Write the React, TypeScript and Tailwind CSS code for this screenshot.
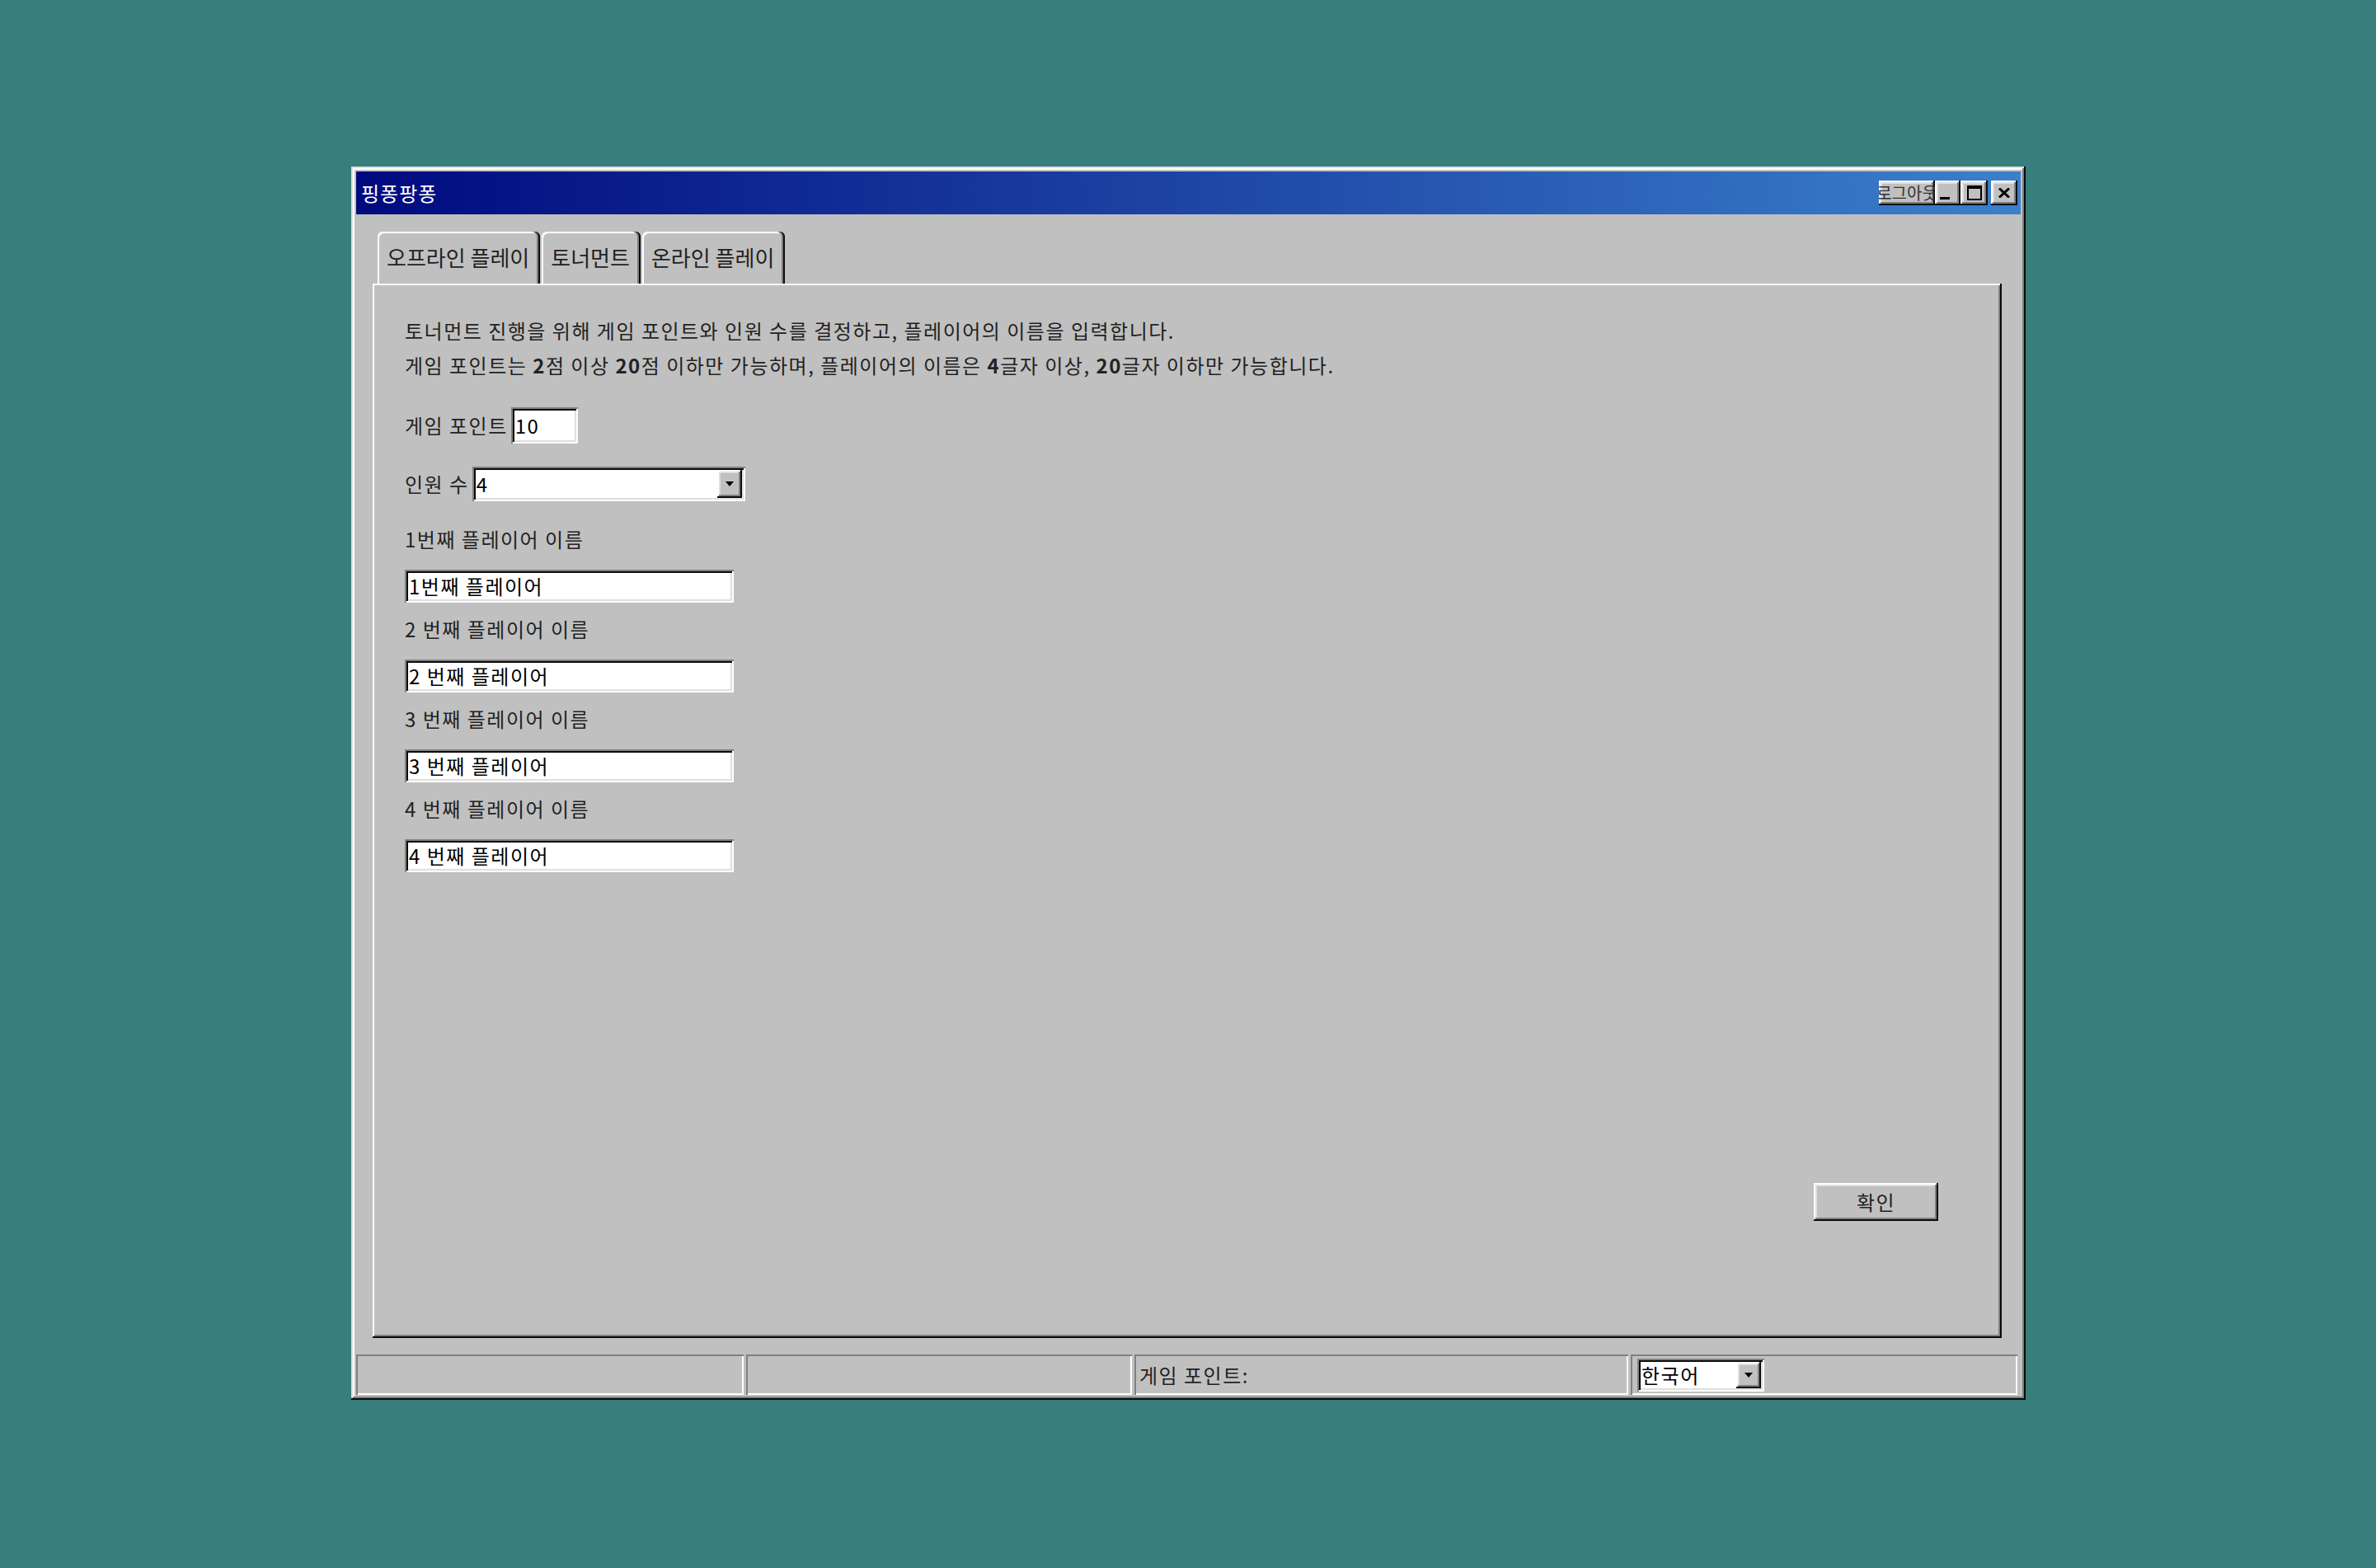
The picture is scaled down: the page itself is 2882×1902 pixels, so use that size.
import React from 'react';

// classic 3d borders, drawn with inset shadows
const raised =
  'shadow-[inset_-2px_-2px_0_#0a0a0a,inset_2px_2px_0_#ffffff,inset_-4px_-4px_0_#808080,inset_4px_4px_0_#dfdfdf]';
const sunken =
  'shadow-[inset_2px_2px_0_#808080,inset_-2px_-2px_0_#ffffff,inset_4px_4px_0_#0a0a0a,inset_-4px_-4px_0_#dfdfdf]';
const thinSunken = 'shadow-[inset_2px_2px_0_#808080,inset_-2px_-2px_0_#ffffff]';

const players = ['1번째', '2 번째', '3 번째', '4 번째'];

const Arrow = () => (
  <svg width="10" height="6" viewBox="0 0 10 6">
    <path d="M0 0h10L5 6z" fill="#000" />
  </svg>
);

const Select: React.FC<{ value: string; className: string }> = ({ value, className }) => (
  <div className={`flex bg-white p-[4px] ${sunken} ${className}`}>
    <span className="flex-1 self-center pl-[1px] text-[24px] leading-none tracking-[1.5px] text-black">{value}</span>
    <div className={`flex w-[30px] items-center justify-center bg-[#c0c0c0] ${raised}`}>
      <Arrow />
    </div>
  </div>
);

const TitleButton: React.FC<{ children: React.ReactNode; className?: string }> = ({ children, className = '' }) => (
  <div className={`flex h-[30px] items-center justify-center overflow-hidden bg-[#c0c0c0] ${raised} ${className}`}>
    {children}
  </div>
);

export default function App() {
  return (
    <div className="min-h-screen w-full bg-[#377e7c] pl-[426px] pt-[202px] font-['Noto_Sans_CJK_KR',sans-serif] text-[#222]">
      <div className="flex h-[1496px] w-[2031px] flex-col bg-[#c0c0c0] p-[6px] shadow-[inset_-2px_-2px_0_#0a0a0a,inset_2px_2px_0_#dfdfdf,inset_-4px_-4px_0_#808080,inset_4px_4px_0_#ffffff]">
        {/* title bar */}
        <div className="flex h-[52px] items-center justify-between bg-linear-to-r/srgb from-[#000a7e] to-[#3b80cc] pl-[6px] pr-[4px]">
          <span className="text-[24px] leading-none tracking-[1px] text-white">핑퐁팡퐁</span>
          <div className="flex items-center">
            <TitleButton className="w-[68px]">
              <span className="shrink-0 whitespace-nowrap text-[20px] leading-none text-[#333]">로그아웃</span>
            </TitleButton>
            <TitleButton className="w-[31px] items-end pb-[7px] pr-[8px]">
              <div className="h-[3px] w-[12px] bg-black" />
            </TitleButton>
            <TitleButton className="w-[33px]">
              <div className="h-[18px] w-[18px] border-2 border-t-[4px] border-black" />
            </TitleButton>
            <TitleButton className="ml-[4px] w-[32px]">
              <svg width="14" height="12" viewBox="0 0 14 12">
                <path d="M1 0.5 L13 11.5 M13 0.5 L1 11.5" stroke="#000" strokeWidth="3" />
              </svg>
            </TitleButton>
          </div>
        </div>

        {/* tabs */}
        <div className="mt-[21px] flex h-[63px] gap-[2px] pl-[26px]">
          {['오프라인 플레이', '토너먼트', '온라인 플레이'].map((t) => (
            <div
              key={t}
              className="flex items-center rounded-t-[6px] bg-[#c0c0c0] pl-[11px] pr-[13px] pb-[2px] text-[26px] leading-none shadow-[inset_-2px_0_0_#0a0a0a,inset_-4px_0_0_#808080,inset_2px_2px_0_#ffffff]"
            >
              {t}
            </div>
          ))}
        </div>

        {/* tab body */}
        <div className="ml-[20px] mr-[23px] flex flex-1 flex-col pl-[39px] pt-[36px] text-[24px] tracking-[1.5px] shadow-[inset_-2px_-2px_0_#0a0a0a,inset_2px_2px_0_#ffffff,inset_-4px_-4px_0_#808080]">
          <p className="leading-[42px]">
            토너먼트 진행을 위해 게임 포인트와 인원 수를 결정하고, 플레이어의 이름을 입력합니다.
          </p>
          <p className="leading-[42px]">
            게임 포인트는 <b>2</b>점 이상 <b>20</b>점 이하만 가능하며, 플레이어의 이름은 <b>4</b>글자 이상, <b>20</b>글자 이하만
            가능합니다.
          </p>

          <div className="mt-[30px] flex h-[44px] items-center gap-[4px]">
            <span className="leading-none">게임 포인트</span>
            <div className={`flex h-[44px] w-[81px] items-center bg-white pl-[5px] leading-none text-black ${sunken}`}>
              10
            </div>
          </div>

          <div className="mt-[28px] flex h-[42px] items-center gap-[4px]">
            <span className="leading-none">인원 수</span>
            <Select value="4" className="h-[42px] w-[331px]" />
          </div>

          <div className="mt-[14px] flex flex-col">
            {players.map((p) => (
              <div key={p} className="mt-[11px] flex flex-col">
                <span className="leading-[42px]">{p} 플레이어 이름</span>
                <div className={`mt-[16px] flex h-[40px] w-[399px] items-center bg-white pl-[5px] leading-none text-black ${sunken}`}>
                  {p} 플레이어
                </div>
              </div>
            ))}
          </div>

          <div className="flex flex-1 items-end justify-end pb-[142px] pr-[77px]">
            <button className={`flex h-[46px] w-[151px] items-center justify-center bg-[#c0c0c0] leading-none text-[#222] ${raised}`}>
              확인
            </button>
          </div>
        </div>

        {/* status bar */}
        <div className="mr-[4px] mt-[20px] flex h-[49px] gap-[3px] text-[24px] tracking-[1.5px]">
          <div className={`w-[470px] ${thinSunken}`} />
          <div className={`w-[468px] ${thinSunken}`} />
          <div className={`flex w-[599px] items-center pl-[6px] leading-none ${thinSunken}`}>게임 포인트:</div>
          <div className={`flex flex-1 items-center pl-[8px] ${thinSunken}`}>
            <Select value="한국어" className="h-[40px] w-[154px]" />
          </div>
        </div>
      </div>
    </div>
  );
}
